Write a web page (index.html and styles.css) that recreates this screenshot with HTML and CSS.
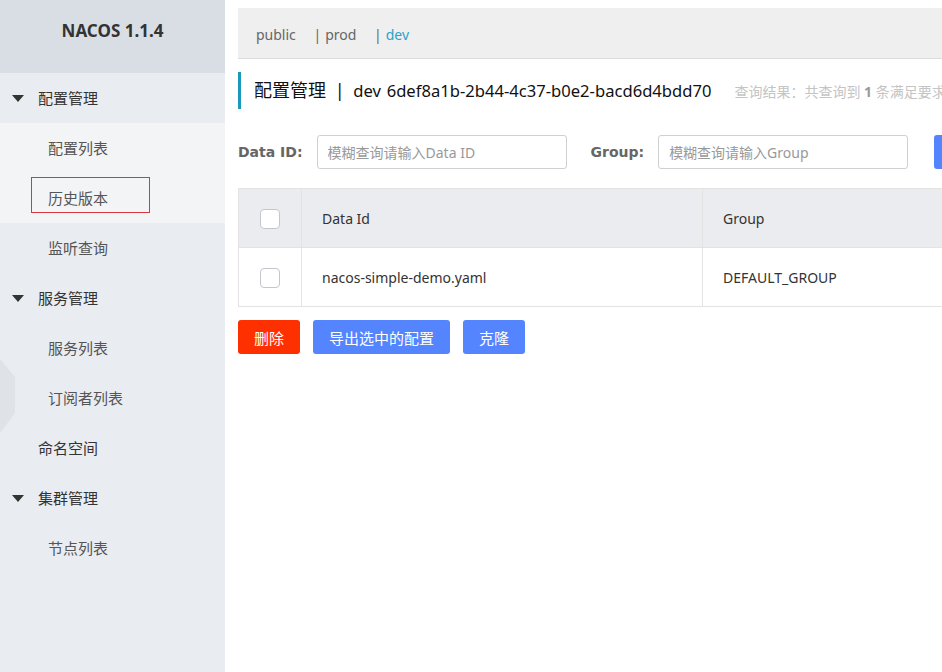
FILE: index.html
```html
<!DOCTYPE html>
<html lang="zh-CN">
<head>
    <meta charset="UTF-8">
    <title>Nacos</title>
    <link rel="stylesheet" href="styles.css">
</head>
<body>
    <div class="sidebar">
        <div class="logo">NACOS 1.1.4</div>
        <ul class="menu">
            <li class="menu-group active-group">
                <div class="menu-title"><span class="caret"></span>配置管理</div>
                <ul class="submenu light">
                    <li>配置列表</li>
                    <li class="marked">历史版本</li>
                </ul>
                <ul class="submenu">
                    <li>监听查询</li>
                </ul>
            </li>
            <li class="menu-group">
                <div class="menu-title"><span class="caret"></span>服务管理</div>
                <ul class="submenu">
                    <li>服务列表</li>
                    <li>订阅者列表</li>
                </ul>
            </li>
            <li class="menu-item">命名空间</li>
            <li class="menu-group">
                <div class="menu-title"><span class="caret"></span>集群管理</div>
                <ul class="submenu">
                    <li>节点列表</li>
                </ul>
            </li>
        </ul>
        <svg class="toggle" width="16" height="76" viewBox="0 0 16 76">
            <polygon points="0,0 15,18 15,54 0,74" fill="#dfe2e7"/>
        </svg>
    </div>

    <div class="main">
        <div class="ns-bar">
            <span class="ns">public</span>
            <span class="ns"><i>|</i>prod</span>
            <span class="ns current"><i>|</i>dev</span>
        </div>

        <div class="page-title">
            <h2>配置管理 <span class="sep">|</span> <span class="latin">dev</span> <span class="latin ns-id">6def8a1b-2b44-4c37-b0e2-bacd6d4bdd70</span></h2>
            <span class="result">查询结果：共查询到 <b>1</b> 条满足要求的配置。</span>
        </div>

        <form class="search">
            <label for="dataId">Data ID:</label>
            <input type="text" id="dataId" placeholder="模糊查询请输入Data ID">
            <label for="group" class="group-label">Group:</label>
            <input type="text" id="group" placeholder="模糊查询请输入Group">
            <button type="button" class="btn primary">查询</button>
        </form>

        <table class="config-table">
            <thead>
                <tr>
                    <th class="col-check"><span class="checkbox"></span></th>
                    <th class="col-id">Data Id</th>
                    <th class="col-group">Group</th>
                    <th>操作</th>
                </tr>
            </thead>
            <tbody>
                <tr>
                    <td class="col-check"><span class="checkbox"></span></td>
                    <td>nacos-simple-demo.yaml</td>
                    <td>DEFAULT_GROUP</td>
                    <td>详情</td>
                </tr>
            </tbody>
        </table>

        <div class="actions">
            <button type="button" class="btn danger">删除</button>
            <button type="button" class="btn primary">导出选中的配置</button>
            <button type="button" class="btn primary">克隆</button>
        </div>
    </div>
</body>
</html>
```

FILE: styles.css
```css
body {
    margin: 0;
    height: 672px;
    overflow: hidden;
    display: flex;
    font-family: "Noto Sans", "Noto Sans CJK SC", sans-serif;
    font-size: 14px;
    color: #333;
    background: #fff;
}

ul {
    list-style: none;
    margin: 0;
    padding: 0;
}

/* sidebar */
.sidebar {
    position: relative;
    width: 225px;
    flex-shrink: 0;
    background: #e9ecf1;
}

.logo {
    height: 73px;
    line-height: 62px;
    text-align: center;
    background: #d9dee4;
    font-weight: bold;
    font-size: 17px;
    color: #333;
}

.menu-title, .menu-item, .submenu li {
    height: 50px;
    line-height: 50px;
    font-size: 15px;
    color: #333;
}

.menu-title, .menu-item {
    padding-left: 38px;
    position: relative;
}

.caret {
    position: absolute;
    left: 12px;
    top: 22px;
    border-left: 6px solid transparent;
    border-right: 6px solid transparent;
    border-top: 7px solid #333;
}

.submenu li {
    padding-left: 48px;
    color: #555;
}

.submenu.light {
    background: #f3f4f6;
}

.marked {
    position: relative;
}

.marked::after {
    content: "";
    position: absolute;
    left: 31px;
    top: 4px;
    width: 117px;
    height: 34px;
    border: 1px solid #d9363e;
}

.toggle {
    position: absolute;
    left: 0;
    top: 359px;
}

/* main */
.main {
    flex: 1;
    min-width: 0;
    padding: 8px 0 0 13px;
}

.ns-bar {
    width: 1100px;
    height: 50px;
    line-height: 54px;
    background: #efefef;
    border-bottom: 1px solid #dcdcdc;
    padding-left: 18px;
    color: #666;
}

.ns {
    margin-right: 14px;
}

.ns i {
    font-style: normal;
    margin-right: 4px;
}

.ns.current {
    color: #2aa2cc;
}

.ns.current i {
    color: #666;
}

.page-title {
    display: flex;
    align-items: center;
    white-space: nowrap;
    margin-top: 13px;
    height: 37px;
    border-left: 3px solid #1a99bd;
    padding-left: 13px;
}

.page-title h2 {
    margin: 0;
    margin-top: -3px;
    font-size: 18px;
    font-weight: normal;
    color: #111;
}

.page-title .latin {
    font-size: 16.6px;
}

.sep {
    margin: 0 4px;
}

.ns-id {
    margin-left: 1px;
}

.result {
    margin-left: 23px;
    color: #c4c4c4;
    font-size: 14px;
}

.result b {
    color: #999;
}

.search {
    display: flex;
    align-items: center;
    white-space: nowrap;
    margin-top: 26px;
    width: 1100px;
}

.search label {
    font-family: "DejaVu Sans", sans-serif;
    font-weight: bold;
    font-size: 14px;
    color: #666;
    margin-right: 14px;
}

.search .group-label {
    margin-left: 24px;
    margin-right: 14px;
}

.search input {
    box-sizing: border-box;
    width: 250px;
    height: 34px;
    padding: 0 10px;
    border: 1px solid #d0d0d0;
    border-radius: 3px;
    font-family: inherit;
    font-size: 14px;
}

.search input::placeholder {
    color: #999;
}

.search .btn {
    margin-left: 26px;
}

.config-table {
    margin-top: 19px;
    width: 1200px;
    border-collapse: collapse;
    table-layout: fixed;
    border: 1px solid #e3e3e3;
}

.config-table th, .config-table td {
    height: 58px;
    text-align: left;
    padding: 0 20px;
    border-left: 1px solid #e3e3e3;
    font-weight: normal;
    color: #333;
}

.config-table th {
    background: #ebecf0;
    border-bottom: 1px solid #e3e3e3;
}

.config-table .col-check {
    width: 62px;
    padding: 0;
    text-align: center;
}

.col-id {
    width: 360px;
}

.col-group {
    width: 360px;
}

.checkbox {
    display: inline-block;
    box-sizing: border-box;
    width: 20px;
    height: 20px;
    border: 1px solid #c4c6cf;
    border-radius: 4px;
    background: #fff;
    vertical-align: middle;
}

.actions {
    display: flex;
    gap: 13px;
    margin-top: 13px;
}

.btn {
    height: 34px;
    padding: 0 16px;
    border: none;
    border-radius: 3px;
    color: #fff;
    font-family: inherit;
    font-size: 15px;
    cursor: pointer;
}

.btn.primary {
    background: #5584ff;
}

.btn.danger {
    background: #ff3000;
}
```
